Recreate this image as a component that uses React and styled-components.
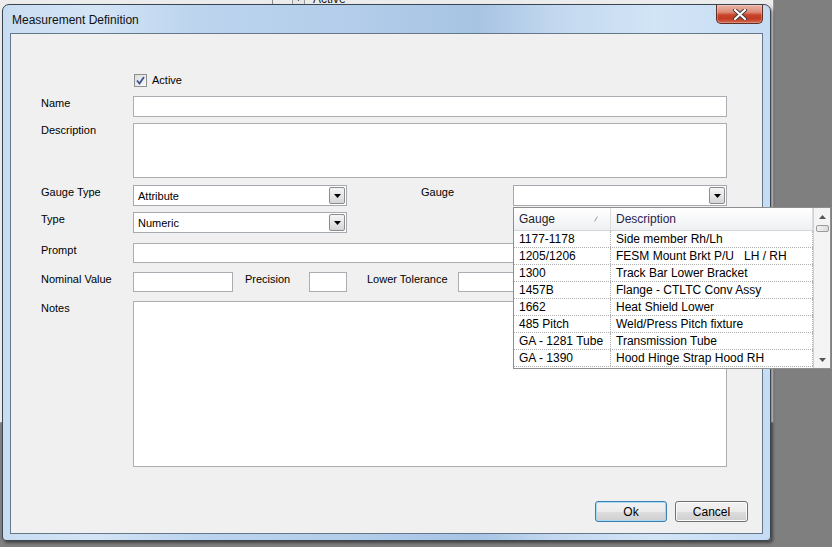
import styled, { createGlobalStyle } from "styled-components";

const GlobalStyle = createGlobalStyle`
  html, body {
    margin: 0;
    padding: 0;
  }
  body {
    width: 832px;
    height: 547px;
    overflow: hidden;
    background: #7f7f7f;
    font-family: "Liberation Sans", Arial, sans-serif;
  }
`;

const gauges = [
  ["1177-1178", "Side member Rh/Lh"],
  ["1205/1206", "FESM Mount Brkt P/U   LH / RH"],
  ["1300", "Track Bar Lower Bracket"],
  ["1457B", "Flange - CTLTC Conv Assy"],
  ["1662", "Heat Shield Lower"],
  ["485 Pitch", "Weld/Press Pitch fixture"],
  ["GA - 1281 Tube", "Transmission Tube"],
  ["GA - 1390", "Hood Hinge Strap Hood RH"],
];

const Arrow = ({ up, color = "#000" }) => (
  <svg width="7" height="4" viewBox="0 0 7 4">
    <path d={up ? "M0 4 L3.5 0 L7 4 Z" : "M0 0 L7 0 L3.5 4 Z"} fill={color} />
  </svg>
);

const App = () => {
  return (
    <>
      <GlobalStyle />
      <Desktop>
        <BackWindow>
          <BackRow>
            <BackDivider />
            <BackDrop>
              <Arrow color="#333" />
            </BackDrop>
            <BackText>Active</BackText>
          </BackRow>
        </BackWindow>

        <Dialog>
          <TitleBar>
            <Title>Measurement Definition</Title>
            <CloseButton>
              <svg width="14" height="11" viewBox="0 0 14 11">
                <path
                  d="M2 1 L12 10 M12 1 L2 10"
                  stroke="#3a3a3a"
                  strokeWidth="4"
                  strokeLinecap="round"
                />
                <path
                  d="M2 1 L12 10 M12 1 L2 10"
                  stroke="#fff"
                  strokeWidth="2.2"
                  strokeLinecap="round"
                />
              </svg>
            </CloseButton>
          </TitleBar>

          <Client>
            <Form>
              <Row $top={0} $center>
                <Spacer $w={92} />
                <CheckBox>
                  <svg width="9" height="9" viewBox="0 0 9 9">
                    <path
                      d="M1 4.5 L3.5 7.5 L8 1"
                      fill="none"
                      stroke="#3e528f"
                      strokeWidth="1.8"
                    />
                  </svg>
                </CheckBox>
                <CheckLabel>Active</CheckLabel>
              </Row>

              <Row $top={9}>
                <Label $w={92}>Name</Label>
                <TextBox $w={594} $h={21} />
              </Row>

              <Row $top={6}>
                <Label $w={92}>Description</Label>
                <TextBox $w={594} $h={55} />
              </Row>

              <Row $top={7}>
                <Label $w={92}>Gauge Type</Label>
                <Combo $w={214}>
                  <ComboText>Attribute</ComboText>
                  <DropButton>
                    <Arrow />
                  </DropButton>
                </Combo>
                <Label $w={92} $left={74}>
                  Gauge
                </Label>
                <ComboWrap>
                  <Combo $w={214}>
                    <ComboText />
                    <DropButton>
                      <Arrow />
                    </DropButton>
                  </Combo>
                  <Popup>
                    <Grid>
                      <HeaderRow>
                        <HeaderCell>
                          Gauge
                          <SortMark>
                            <svg width="4" height="6" viewBox="0 0 4 6">
                              <path d="M0.5 5.5 L3.5 0.5" stroke="#9a9a9a" />
                            </svg>
                          </SortMark>
                        </HeaderCell>
                        <HeaderCell $purple>Description</HeaderCell>
                      </HeaderRow>
                      {gauges.map(([g, d]) => (
                        <GridRow key={g}>
                          <Cell>{g}</Cell>
                          <Cell>{d}</Cell>
                        </GridRow>
                      ))}
                    </Grid>
                    <ScrollBar>
                      <ScrollArrow>
                        <Arrow up color="#555" />
                      </ScrollArrow>
                      <Thumb />
                      <ScrollFill />
                      <ScrollArrow>
                        <Arrow color="#555" />
                      </ScrollArrow>
                    </ScrollBar>
                  </Popup>
                </ComboWrap>
              </Row>

              <Row $top={6}>
                <Label $w={92}>Type</Label>
                <Combo $w={214}>
                  <ComboText>Numeric</ComboText>
                  <DropButton>
                    <Arrow />
                  </DropButton>
                </Combo>
              </Row>

              <Row $top={10}>
                <Label $w={92}>Prompt</Label>
                <TextBox $w={594} $h={20} />
              </Row>

              <Row $top={9}>
                <Label $w={92}>Nominal Value</Label>
                <TextBox $w={100} $h={20} />
                <Label $w={64} $left={12}>
                  Precision
                </Label>
                <TextBox $w={38} $h={20} />
                <Label $w={91} $left={20}>
                  Lower Tolerance
                </Label>
                <TextBox $w={100} $h={20} />
              </Row>

              <Row $top={9}>
                <Label $w={92}>Notes</Label>
                <TextBox $w={594} $h={166} />
              </Row>

              <ButtonRow>
                <Button $w={72} $focused>
                  Ok
                </Button>
                <Button $w={73}>Cancel</Button>
              </ButtonRow>
            </Form>
          </Client>
        </Dialog>
      </Desktop>
    </>
  );
};

const Desktop = styled.div`
  position: relative;
  width: 832px;
  height: 547px;
  overflow: hidden;
  background: #7f7f7f;
`;

const BackWindow = styled.div`
  position: absolute;
  left: -10px;
  top: -9px;
  width: 782px;
  height: 430px;
  background: #ececec;
  border: 1px solid #9a9a9a;
`;

const BackRow = styled.div`
  display: flex;
  align-items: center;
  padding-left: 281px;
  height: 14px;
`;

const BackDivider = styled.div`
  width: 1px;
  height: 14px;
  background: #8a8a8a;
`;

const BackDrop = styled.div`
  margin-left: 19px;
  width: 11px;
  height: 12px;
  border: 1px solid #9a9a9a;
  display: flex;
  align-items: center;
  justify-content: center;
  background: #e6e6e6;
`;

const BackText = styled.span`
  margin-left: 8px;
  font-size: 12px;
  line-height: 14px;
  color: #222;
`;

const Dialog = styled.div`
  position: absolute;
  left: 2px;
  top: 4px;
  width: 769px;
  height: 537px;
  box-sizing: border-box;
  border: 1px solid #3b4653;
  border-radius: 7px 7px 4px 4px;
  padding: 0 7px 6px 7px;
  display: flex;
  flex-direction: column;
  background: linear-gradient(
    90deg,
    #c9ddf2 0%,
    #d3e4f5 12%,
    #bcd4ee 25%,
    #b3cdea 45%,
    #a7c4e3 62%,
    #c3d8ef 72%,
    #d2e4f6 85%,
    #c6dcf3 100%
  );
  box-shadow: 2px 2px 3px rgba(0, 0, 0, 0.45);
`;

const TitleBar = styled.div`
  height: 28px;
  display: flex;
  justify-content: space-between;
  align-items: flex-start;
`;

const Title = styled.div`
  padding: 8px 0 0 2px;
  font-size: 12px;
  line-height: 15px;
  color: #101010;
`;

const CloseButton = styled.div`
  width: 47px;
  height: 19px;
  box-sizing: border-box;
  border: 1px solid #5c3026;
  border-top: none;
  border-radius: 0 0 5px 5px;
  background: linear-gradient(
    180deg,
    #eab4a6 0%,
    #dc8a77 40%,
    #c8462c 55%,
    #c33a22 75%,
    #d4684e 100%
  );
  display: flex;
  align-items: center;
  justify-content: center;
  box-shadow: inset 0 0 0 1px rgba(255, 255, 255, 0.25);
`;

const Client = styled.div`
  flex: 1;
  border: 1px solid #64778b;
  background: #f0f0f0;
  display: flex;
  flex-direction: column;
`;

const Form = styled.div`
  padding: 39px 0 0 30px;
  display: flex;
  flex-direction: column;
  font-size: 11px;
  color: #000;
`;

const Row = styled.div`
  display: flex;
  align-items: ${(p) => (p.$center ? "center" : "flex-start")};
  margin-top: ${(p) => p.$top}px;
`;

const Spacer = styled.div`
  width: ${(p) => p.$w}px;
  flex-shrink: 0;
`;

const Label = styled.div`
  width: ${(p) => p.$w}px;
  margin-left: ${(p) => p.$left || 0}px;
  flex-shrink: 0;
  line-height: 14px;
  white-space: nowrap;
`;

const CheckBox = styled.div`
  margin-left: 1px;
  width: 13px;
  height: 13px;
  box-sizing: border-box;
  border: 1px solid #8e8f8f;
  background: linear-gradient(135deg, #dcdcdc, #fafafa);
  display: flex;
  align-items: center;
  justify-content: center;
`;

const CheckLabel = styled.span`
  margin-left: 5px;
  line-height: 14px;
`;

const TextBox = styled.div`
  width: ${(p) => p.$w}px;
  height: ${(p) => p.$h}px;
  box-sizing: border-box;
  flex-shrink: 0;
  background: #fff;
  border: 1px solid #abadb3;
`;

const ComboWrap = styled.div`
  position: relative;
`;

const Combo = styled.div`
  width: ${(p) => p.$w}px;
  height: 21px;
  box-sizing: border-box;
  flex-shrink: 0;
  background: #fff;
  border: 1px solid #a5a9b0;
  display: flex;
  align-items: center;
  justify-content: space-between;
  padding: 0 1px 0 4px;
`;

const ComboText = styled.span`
  line-height: 14px;
`;

const DropButton = styled.div`
  width: 16px;
  height: 17px;
  box-sizing: border-box;
  border: 1px solid #8c8c8c;
  border-radius: 2px;
  background: linear-gradient(180deg, #f5f5f5 0%, #e6e6e6 50%, #d6d6d6 100%);
  display: flex;
  align-items: center;
  justify-content: center;
`;

const Popup = styled.div`
  position: absolute;
  top: 22px;
  left: 0;
  z-index: 10;
  width: 318px;
  height: 162px;
  box-sizing: border-box;
  border: 1px solid #8e8e8e;
  background: #fff;
  display: flex;
`;

const Grid = styled.div`
  flex: 1;
  display: flex;
  flex-direction: column;
  border-right: 1px solid #d0d0d0;
`;

const HeaderRow = styled.div`
  display: grid;
  grid-template-columns: 97px 1fr;
  height: 23px;
  box-sizing: border-box;
  border-bottom: 1px solid #d5d5d5;
  background: linear-gradient(180deg, #ffffff 0%, #f7f8fa 50%, #eef0f3 100%);
`;

const HeaderCell = styled.div`
  position: relative;
  padding-left: 5px;
  line-height: 22px;
  font-size: 12px;
  color: ${(p) => (p.$purple ? "#2b1d4e" : "#1c1c2c")};
  border-right: 1px solid #dcdcdc;
`;

const SortMark = styled.span`
  position: absolute;
  right: 12px;
  top: 8px;
  display: flex;
`;

const GridRow = styled.div`
  display: grid;
  grid-template-columns: 97px 1fr;
  height: 17px;
  box-sizing: border-box;
  border-bottom: 1px dotted #b0b0b0;
`;

const Cell = styled.div`
  padding-left: 5px;
  line-height: 16px;
  font-size: 12px;
  white-space: pre;
  overflow: hidden;
  border-right: 1px dotted #b0b0b0;
`;

const ScrollBar = styled.div`
  width: 16px;
  display: flex;
  flex-direction: column;
  align-items: center;
  background: #f4f4f4;
`;

const ScrollArrow = styled.div`
  height: 17px;
  display: flex;
  align-items: center;
  justify-content: center;
`;

const Thumb = styled.div`
  width: 13px;
  height: 7px;
  box-sizing: border-box;
  border: 1px solid #9a9a9a;
  border-radius: 2px;
  background: linear-gradient(90deg, #f2f2f2, #dcdcdc);
`;

const ScrollFill = styled.div`
  flex: 1;
`;

const ButtonRow = styled.div`
  display: flex;
  justify-content: flex-end;
  gap: 8px;
  margin-top: 34px;
  padding-right: 14px;
`;

const Button = styled.div`
  width: ${(p) => p.$w}px;
  height: 21px;
  box-sizing: border-box;
  border: 1px solid ${(p) => (p.$focused ? "#3c7fb1" : "#707070")};
  border-radius: 3px;
  background: linear-gradient(180deg, #f2f2f2 0%, #ebebeb 50%, #dddddd 51%, #cfcfcf 100%);
  box-shadow: ${(p) =>
    p.$focused ? "inset 0 0 0 1px #a7d9f5" : "inset 0 0 0 1px #fbfbfb"};
  display: flex;
  align-items: center;
  justify-content: center;
  font-size: 12px;
  color: #000;
`;

export default App;
